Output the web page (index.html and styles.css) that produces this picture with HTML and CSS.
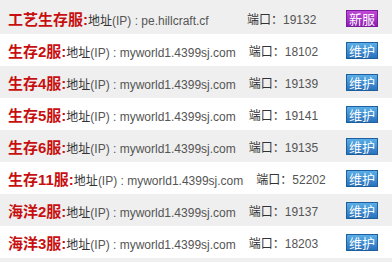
FILE: index.html
```html
<!DOCTYPE html>
<html lang="zh-CN">
<head>
<meta charset="utf-8">
<link rel="stylesheet" href="styles.css">
</head>
<body>
<ul class="servers">
  <li class="row"><span class="info"><b class="name">工艺生存服:</b><span class="addr"><span class="cn">地址</span>(IP) : pe.hillcraft.cf</span></span><span class="port"><span class="cn">端口：</span>19132</span><span class="btn btn-new">新服</span></li>
  <li class="row"><span class="info"><b class="name">生存2服:</b><span class="addr"><span class="cn">地址</span>(IP) : myworld1.4399sj.com</span></span><span class="port"><span class="cn">端口：</span>18102</span><span class="btn btn-fix">维护</span></li>
  <li class="row"><span class="info"><b class="name">生存4服:</b><span class="addr"><span class="cn">地址</span>(IP) : myworld1.4399sj.com</span></span><span class="port"><span class="cn">端口：</span>19139</span><span class="btn btn-fix">维护</span></li>
  <li class="row"><span class="info"><b class="name">生存5服:</b><span class="addr"><span class="cn">地址</span>(IP) : myworld1.4399sj.com</span></span><span class="port"><span class="cn">端口：</span>19141</span><span class="btn btn-fix">维护</span></li>
  <li class="row"><span class="info"><b class="name">生存6服:</b><span class="addr"><span class="cn">地址</span>(IP) : myworld1.4399sj.com</span></span><span class="port"><span class="cn">端口：</span>19135</span><span class="btn btn-fix">维护</span></li>
  <li class="row"><span class="info"><b class="name">生存11服:</b><span class="addr"><span class="cn">地址</span>(IP) : myworld1.4399sj.com</span></span><span class="port"><span class="cn">端口：</span>52202</span><span class="btn btn-fix">维护</span></li>
  <li class="row"><span class="info"><b class="name">海洋2服:</b><span class="addr"><span class="cn">地址</span>(IP) : myworld1.4399sj.com</span></span><span class="port"><span class="cn">端口：</span>19137</span><span class="btn btn-fix">维护</span></li>
  <li class="row"><span class="info"><b class="name">海洋3服:</b><span class="addr"><span class="cn">地址</span>(IP) : myworld1.4399sj.com</span></span><span class="port"><span class="cn">端口：</span>18203</span><span class="btn btn-fix">维护</span></li>
</ul>
</body>
</html>
```

FILE: styles.css
```css
html, body {
  margin: 0;
  padding: 0;
  background: #efefef;
}
.servers {
  list-style: none;
  margin: 0;
  padding: 2px 0 0 0;
  background: #efefef;
  font-family: "Liberation Sans", Arial, "Noto Sans CJK SC", sans-serif;
}
.row {
  display: flex;
  align-items: center;
  height: 32px;
  padding-left: 8px;
  background: #efefef;
  white-space: nowrap;
}
.row:nth-child(even) {
  background: #ffffff;
}
.info {
  display: flex;
  align-items: baseline;
  min-width: 226px;
}
.name {
  font-size: 15px;
  font-weight: bold;
  color: #c80f0f;
  font-family: "Liberation Sans", Arial, "Noto Sans CJK SC", sans-serif;
}
.addr {
  font-size: 12px;
  color: #555555;
}
.cn {
  color: #333333;
  font-family: "Noto Sans CJK SC", sans-serif;
}
.port {
  margin-left: 13px;
  font-size: 12px;
  color: #555555;
  width: 84px;
}
.btn {
  margin-left: auto;
  margin-right: 14px;
  width: 30px;
  height: 15px;
  line-height: 15px;
  text-align: center;
  font-size: 13px;
  color: #ffffff;
  font-family: "Noto Sans CJK SC", sans-serif;
  border: 1px solid #1f5f9e;
}
.btn-new {
  background: linear-gradient(#c04ad8, #8c1fb4);
  border-color: #7a1a9c;
}
.btn-fix {
  background: linear-gradient(#59aee8, #2a72bc);
}
```
